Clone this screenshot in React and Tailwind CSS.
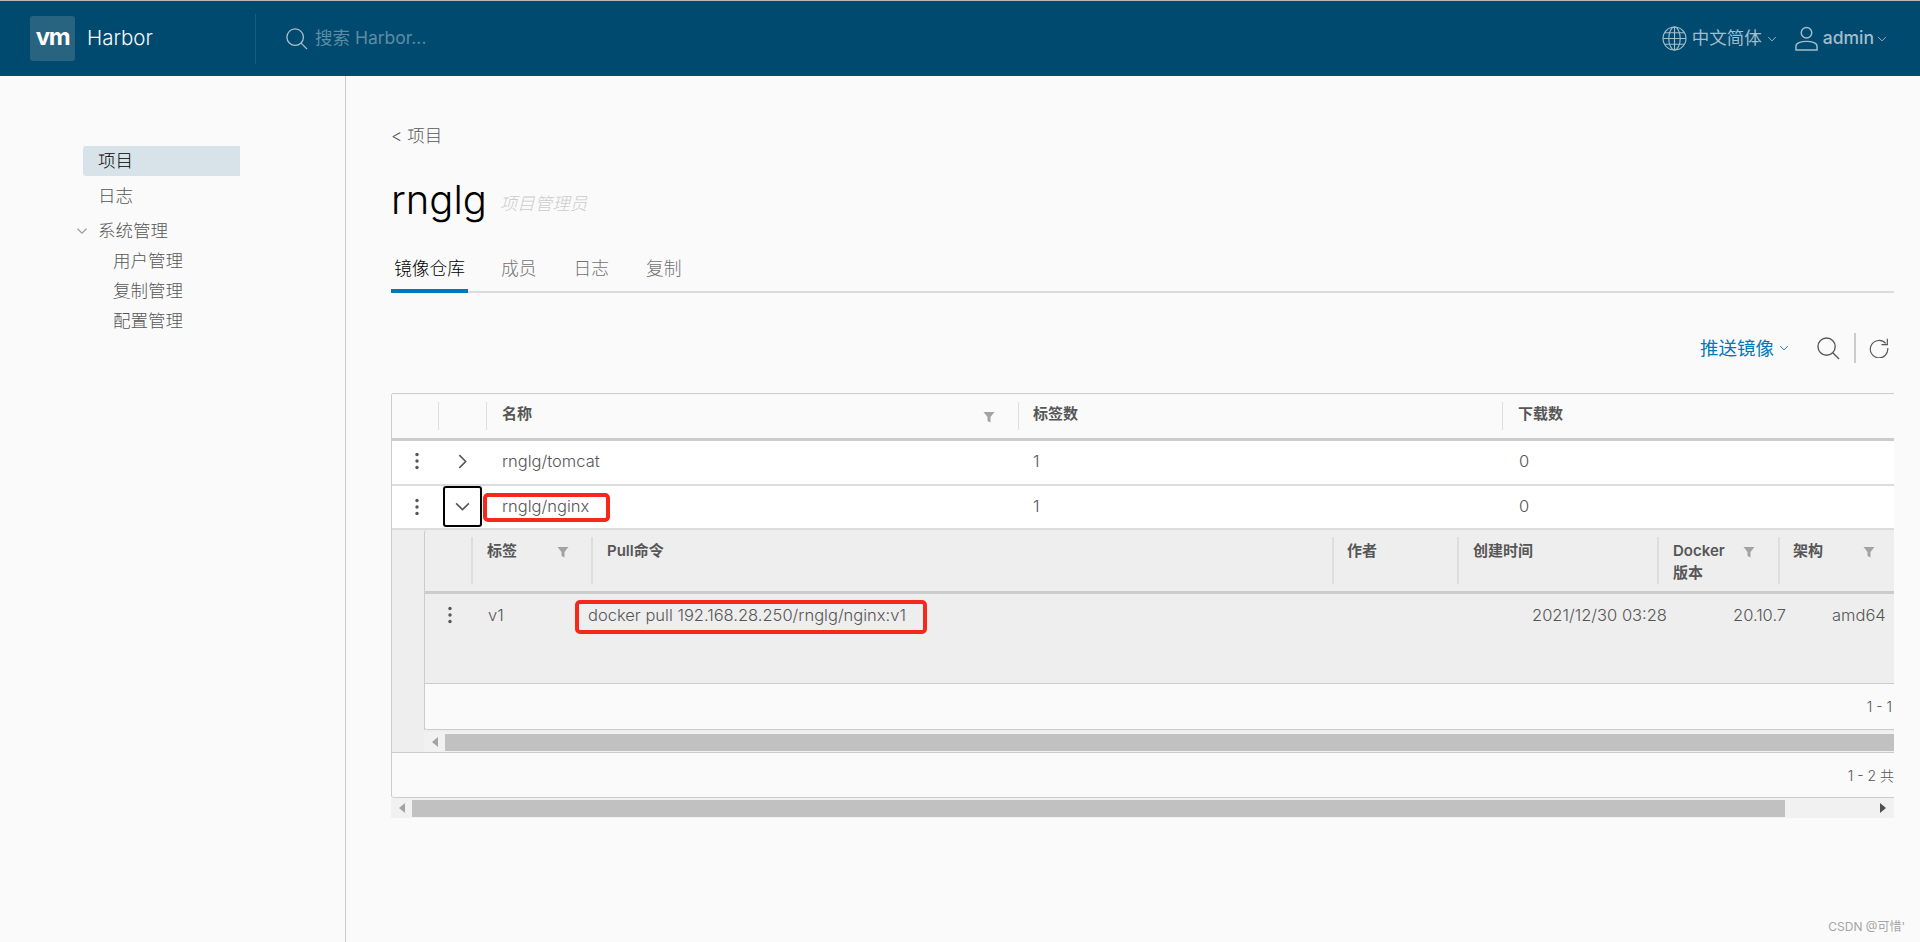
import React from "react";

const FONT = "font-['Inter','Noto_Sans_CJK_SC',sans-serif]";

function Chevron({ dir = "down", className = "" }) {
  const d = dir === "down" ? "M2 5l6 6 6-6" : "M5 2l6 6-6 6";
  return (
    <svg viewBox="0 0 16 16" fill="none" stroke="currentColor" strokeWidth="1.5" className={className}>
      <path d={d} />
    </svg>
  );
}

function Funnel({ className = "" }) {
  return (
    <svg viewBox="0 0 12 12" className={`w-[12px] h-[12px] text-[#a3a3a3] ${className}`} fill="currentColor">
      <path d="M0.5 1h11L7.5 6v5.5l-3-1.5V6z" />
    </svg>
  );
}

function Dots() {
  return (
    <svg viewBox="0 0 4 18" className="w-[4px] h-[18px] text-[#565656]" fill="currentColor">
      <circle cx="2" cy="2.5" r="1.7" />
      <circle cx="2" cy="9" r="1.7" />
      <circle cx="2" cy="15.5" r="1.7" />
    </svg>
  );
}

function SearchIcon({ className = "" }) {
  return (
    <svg viewBox="0 0 24 24" fill="none" stroke="currentColor" strokeWidth="1.4" className={className}>
      <circle cx="10" cy="10" r="9" />
      <path d="M16.5 16.5l6.5 6.5" />
    </svg>
  );
}

function HeadCell({ width, children, filter, sep = true, top = false, filterLeft }) {
  return (
    <div className={`relative h-full shrink-0 ${width}`}>
      {sep && <div className={`absolute left-0 w-[2px] bg-[#dedede] ${top ? "top-[7px] bottom-[7px]" : "top-[8px] bottom-[8px] w-px"}`} />}
      {children}
      {filter && <Funnel className={`absolute ${filterLeft}`} />}
    </div>
  );
}

function ScrollBar({ thumb, arrowRight }) {
  return (
    <div className="flex items-center h-[20px] bg-[#f1f1f1]">
      <div className="w-[21px] shrink-0 flex justify-center">
        <svg viewBox="0 0 6 10" className="w-[6px] h-[10px] text-[#a3a3a3]" fill="currentColor"><path d="M6 0v10L0 5z" /></svg>
      </div>
      <div className={`h-[17px] bg-[#c1c1c1] ${thumb}`} />
      {arrowRight && (
        <div className="ml-auto mr-[8px]">
          <svg viewBox="0 0 6 10" className="w-[6px] h-[10px] text-[#505050]" fill="currentColor"><path d="M0 0v10l6-5z" /></svg>
        </div>
      )}
    </div>
  );
}

function RepoRow({ name, expanded, children }) {
  return (
    <div className={`flex items-center bg-white text-[16.5px] font-light text-[#565656] border-b-2 border-[#dcdcdc] ${expanded ? "h-[44px] pb-[1px]" : "h-[45px] pb-[3px]"}`}>
      <div className="w-[46px] shrink-0 flex justify-center pl-[3px]"><Dots /></div>
      <div className="w-[48px] shrink-0 flex justify-center">
        {expanded ? (
          <div className="relative w-[39px] h-[41px] border-2 border-black rounded-[3px] flex items-center justify-center">
            <Chevron className="w-[17px] h-[17px]" />
          </div>
        ) : (
          <Chevron dir="right" className="w-[17px] h-[17px]" />
        )}
      </div>
      <div className="relative w-[532px] shrink-0 pl-[16px]">
        {name}
        {children}
      </div>
      <div className="w-[484px] shrink-0 pl-[15px]">1</div>
      <div className="pl-[17px]">0</div>
    </div>
  );
}

export default function App() {
  return (
    <div className={`h-[942px] overflow-hidden bg-[#fafafa] relative ${FONT}`}>
      <header className="h-[76px] bg-[#004a70] border-t border-[#b9b9b9] flex items-center">
        <div className="ml-[30px] w-[45px] h-[45px] rounded-[3px] bg-[#28637f] flex items-center justify-center text-white font-bold text-[24px] tracking-[-1.5px] leading-none pb-[3px]">
          vm
        </div>
        <span className="ml-[12px] text-[20.5px] font-light text-[#fafafa] w-[154px]">Harbor</span>
        <div className="ml-[14px] w-px h-[50px] bg-[#155c80]" />
        <SearchIcon className="ml-[30px] w-[22px] h-[22px] text-[#a9c0cd]" />
        <span className="ml-[7px] text-[17.5px] text-[#5f8ba3]">搜索 Harbor...</span>
        <div className="ml-auto flex items-center text-[#a3bdcb] mr-[33px]">
          <svg viewBox="0 0 24 24" fill="none" stroke="currentColor" strokeWidth="1.1" className="w-[25px] h-[25px]">
            <circle cx="12" cy="12" r="11" />
            <ellipse cx="12" cy="12" rx="5.5" ry="11" />
            <path d="M12 1v22M1 12h22M2.8 6.5h18.4M2.8 17.5h18.4" />
          </svg>
          <span className="ml-[5px] text-[17.5px]">中文简体</span>
          <Chevron className="ml-[5px] w-[10px] h-[10px]" />
          <svg viewBox="0 0 24 26" fill="none" stroke="currentColor" strokeWidth="1.5" className="ml-[18px] w-[23px] h-[25px]">
            <circle cx="12" cy="7" r="5.5" />
            <path d="M1 25v-4c0-3 5-5 11-5s11 2 11 5v4z" />
          </svg>
          <span className="ml-[5px] text-[17.5px] font-medium">admin</span>
          <Chevron className="ml-[3px] w-[10px] h-[10px]" />
        </div>
      </header>

      <div className="flex h-[866px]">
        <aside className="w-[346px] shrink-0 border-r border-[#cccccc] pt-[70px] pl-[83px] text-[17.5px] font-light text-[#565656]">
          <div className="w-[157px] h-[30px] pl-[15px] leading-[30px] bg-[#d8e3e9] rounded-l-[3px] text-black">项目</div>
          <div className="h-[30px] mt-[5px] pl-[15px] leading-[30px]">日志</div>
          <div className="h-[30px] mt-[5px] flex items-center">
            <Chevron className="-ml-[7px] w-[12px] h-[12px] text-[#9a9a9a]" />
            <span className="ml-[10px]">系统管理</span>
          </div>
          <div className="pl-[30px]">
            <div className="h-[30px] leading-[30px]">用户管理</div>
            <div className="h-[30px] leading-[30px]">复制管理</div>
            <div className="h-[30px] leading-[30px]">配置管理</div>
          </div>
        </aside>

        <main className="flex-1 min-w-0 pl-[45px] pr-[26px]">
          <div className="h-[24px] mt-[48px] leading-[24px] text-[17.5px] font-light text-[#565656]">&lt; 项目</div>

          <div className="h-[50px] mt-[27px] flex items-center">
            <span className="text-[40px] font-light text-black">rnglg</span>
            <span className="ml-[13px] mt-[8px] text-[17.5px] italic font-light text-[#cccccc]">项目管理员</span>
          </div>

          <div className="h-[48px] mt-[20px] flex border-b-2 border-[#dcdcdc] text-[17.75px] font-light text-[#737373]">
            <div className="w-[77px] h-[48px] pl-[3px] leading-[48px] border-b-[4px] border-[#0079b8] text-black">镜像仓库</div>
            <div className="ml-[33px] leading-[48px]">成员</div>
            <div className="ml-[37px] leading-[48px]">日志</div>
            <div className="ml-[37px] leading-[48px]">复制</div>
          </div>

          <div className="h-[30px] mt-[40px] flex items-center justify-end pr-[5px]">
            <span className="mt-[2px] text-[18.5px] text-[#0079b8]">推送镜像</span>
            <Chevron className="ml-[5px] w-[10px] h-[10px] text-[#0079b8]" />
            <SearchIcon className="ml-[28px] w-[23px] h-[23px] text-[#565656]" />
            <div className="ml-[14px] w-[2px] h-[30px] bg-[#cccccc]" />
            <svg viewBox="0 0 24 24" fill="none" stroke="currentColor" strokeWidth="1.4" className="ml-[13px] w-[20px] h-[20px] text-[#565656]">
              <path d="M20 6.5A10.5 10.5 0 1 0 22.5 12" />
              <path d="M22 1v7h-7" />
            </svg>
          </div>

          <div className="mt-[30px] w-full overflow-hidden">
            <div className="border-l border-[#cccccc] rounded-tl-[3px] rounded-bl-[3px]">
              {/* outer head */}
              <div className="flex h-[48px] bg-[#fafafa] border-t border-b-[3px] border-[#cccccc] text-[15px] font-semibold text-[#565656]">
                <div className="w-[46px] shrink-0" />
                <HeadCell width="w-[48px]" />
                <HeadCell width="w-[532px]" filter filterLeft="left-[497px] top-[17px]">
                  <span className="absolute left-[16px] top-[9px]">名称</span>
                </HeadCell>
                <HeadCell width="w-[484px]">
                  <span className="absolute left-[15px] top-[9px]">标签数</span>
                </HeadCell>
                <HeadCell width="w-[300px]">
                  <span className="absolute left-[16px] top-[9px]">下载数</span>
                </HeadCell>
              </div>

              <RepoRow name="rnglg/tomcat" />
              <RepoRow name="rnglg/nginx" expanded>
                <div className="absolute -left-[3px] -top-[1px] w-[127px] h-[29px] border-[4px] border-[#f5281a] rounded-[5px]" />
              </RepoRow>

              {/* expanded tag list */}
              <div className="h-[222px] bg-[#eeeeee] pl-[32px]">
                <div className="border-l border-[#cccccc] rounded-tl-[3px]">
                  <div className="flex h-[64px] border-b-[3px] border-[#cccccc] text-[15px] font-semibold text-[#565656] leading-[22px]">
                    <div className="w-[46px] shrink-0" />
                    <HeadCell width="w-[120px]" top filter filterLeft="left-[86px] top-[16px]">
                      <span className="absolute left-[16px] top-[10px]">标签</span>
                    </HeadCell>
                    <HeadCell width="w-[741px]" top>
                      <span className="absolute left-[16px] top-[10px]">Pull命令</span>
                    </HeadCell>
                    <HeadCell width="w-[125px]" top>
                      <span className="absolute left-[15px] top-[10px]">作者</span>
                    </HeadCell>
                    <HeadCell width="w-[200px]" top>
                      <span className="absolute left-[16px] top-[10px]">创建时间</span>
                    </HeadCell>
                    <HeadCell width="w-[121px]" top filter filterLeft="left-[86px] top-[16px]">
                      <span className="absolute left-[16px] top-[10px]">Docker<br />版本</span>
                    </HeadCell>
                    <HeadCell width="w-[120px]" top filter filterLeft="left-[85px] top-[16px]">
                      <span className="absolute left-[15px] top-[10px]">架构</span>
                    </HeadCell>
                  </div>

                  <div className="flex h-[90px] border-b border-[#cccccc] pt-[9px] text-[16.5px] font-light text-[#565656] leading-[24px] whitespace-nowrap">
                    <div className="w-[63px] shrink-0 pl-[23px] pt-[3px]"><Dots /></div>
                    <div className="w-[100px] shrink-0">v1</div>
                    <div className="relative w-[944px] shrink-0">
                      docker pull 192.168.28.250/rnglg/nginx:v1
                      <div className="absolute -left-[13px] -top-[3px] w-[352px] h-[34px] border-[4px] border-[#f5281a] rounded-[5px]" />
                    </div>
                    <div className="w-[201px] shrink-0">2021/12/30 03:28</div>
                    <div className="w-[99px] shrink-0">20.10.7</div>
                    <div>amd64</div>
                  </div>

                  <div className="h-[46px] bg-[#fafafa] border-b border-[#cccccc] rounded-bl-[3px] flex items-center justify-end pr-[2px] text-[14px] font-light text-[#565656]">
                    1 - 1
                  </div>
                </div>
                <div className="mt-[2px]">
                  <ScrollBar thumb="flex-1" />
                </div>
              </div>

              {/* outer footer */}
              <div className="h-[46px] bg-[#fafafa] border-t border-b border-[#cccccc] rounded-bl-[3px] flex items-center justify-end text-[14px] font-light text-[#565656] whitespace-nowrap">
                1 - 2 共
              </div>
            </div>
            <ScrollBar thumb="w-[1373px]" arrowRight />
          </div>
        </main>
      </div>

      <div className="absolute right-[15px] bottom-[6px] text-[12px] text-[#a5a5a5]">CSDN @可惜'</div>
    </div>
  );
}
